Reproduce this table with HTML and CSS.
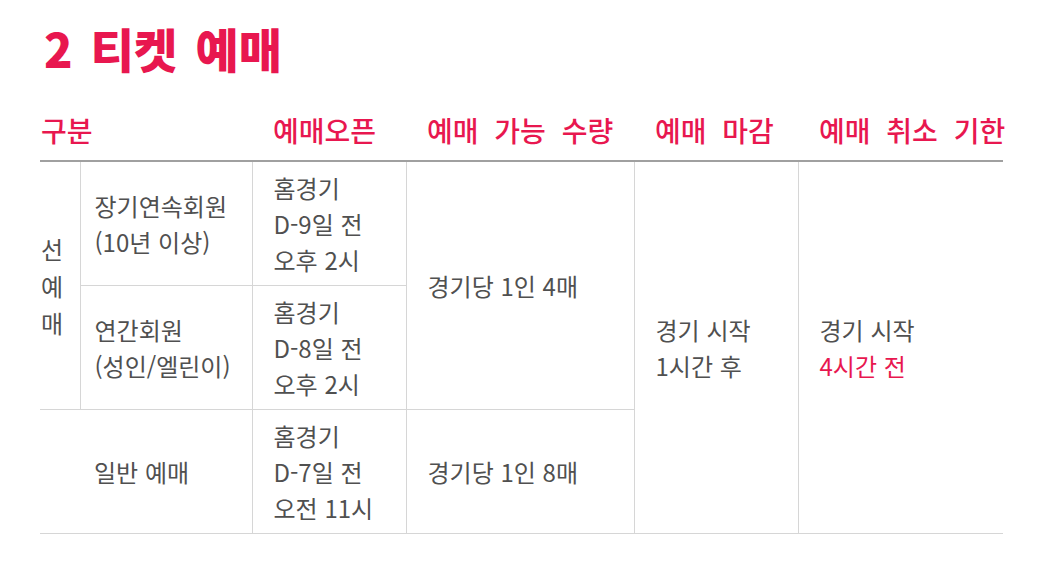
FILE: index.html
```html
<!DOCTYPE html>
<html lang="ko">
<head>
<meta charset="utf-8">
<title>티켓 예매</title>
<link rel="stylesheet" href="styles.css">
</head>
<body>
<div class="page">
  <h1 class="title">2 티켓 예매</h1>
  <table class="ticket">
    <colgroup>
      <col class="c1"><col class="c2"><col class="c3"><col class="c4"><col class="c5"><col class="c6">
    </colgroup>
    <thead>
      <tr>
        <th colspan="2" class="h-first">구분</th>
        <th>예매오픈</th>
        <th>예매 가능 수량</th>
        <th>예매 마감</th>
        <th>예매 취소 기한</th>
      </tr>
    </thead>
    <tbody>
      <tr>
        <td rowspan="2" class="vert">선<br>예<br>매</td>
        <td class="cat">장기연속회원<br>(10년 이상)</td>
        <td class="open">홈경기<br>D-9일 전<br>오후 2시</td>
        <td rowspan="2">경기당 1인 4매</td>
        <td rowspan="3" class="last-col">경기 시작<br>1시간 후</td>
        <td rowspan="3" class="last-col">경기 시작<br><span class="red">4시간 전</span></td>
      </tr>
      <tr>
        <td class="cat">연간회원<br>(성인/엘린이)</td>
        <td class="open">홈경기<br>D-8일 전<br>오후 2시</td>
      </tr>
      <tr class="row3">
        <td colspan="2" class="general">일반 예매</td>
        <td class="open">홈경기<br>D-7일 전<br>오전 11시</td>
        <td>경기당 1인 8매</td>
      </tr>
    </tbody>
  </table>
</div>
</body>
</html>
```

FILE: styles.css
```css
html, body {
  margin: 0;
  padding: 0;
  background: #ffffff;
}

body {
  font-family: "Noto Sans CJK KR", "Noto Sans", sans-serif;
  color: #555555;
}

.page {
  padding: 22px 0 0 40px;
}

.title {
  margin: 0 0 26px 4px;
  font-size: 47px;
  line-height: 52px;
  font-weight: 900;
  color: #e8174f;
  word-spacing: 5px;
}

.ticket {
  border-collapse: collapse;
  table-layout: fixed;
  width: 963px;
}

.c1 { width: 40px; }
.c2 { width: 172px; }
.c3 { width: 154px; }
.c4 { width: 228px; }
.c5 { width: 164px; }
.c6 { width: 205px; }

.ticket th {
  height: 60px;
  padding: 0 0 0 21px;
  text-align: left;
  font-size: 28px;
  font-weight: 500;
  color: #e8174f;
  word-spacing: 8px;
  border-bottom: 2px solid #a0a0a0;
  white-space: nowrap;
}

.ticket th.h-first {
  padding-left: 1px;
}

.ticket td {
  height: 123px;
  padding: 0 0 0 21px;
  font-size: 24px;
  line-height: 36px;
  font-weight: 400;
  color: #505050;
  vertical-align: middle;
  border: 1px solid #d6d6d6;
  border-top: none;
  white-space: nowrap;
}

.ticket td.vert {
  padding: 0 0 0 1px;
  line-height: 37px;
  border-left: none;
}

.ticket td.cat {
  padding-left: 14px;
}

.ticket td.general {
  padding-left: 54px;
  border-left: none;
}

.ticket td.last-col:last-child {
  border-right: none;
}

.ticket .row3 td {
  border-bottom: 1px solid #d6d6d6;
}

.red {
  color: #e8174f;
}
```
